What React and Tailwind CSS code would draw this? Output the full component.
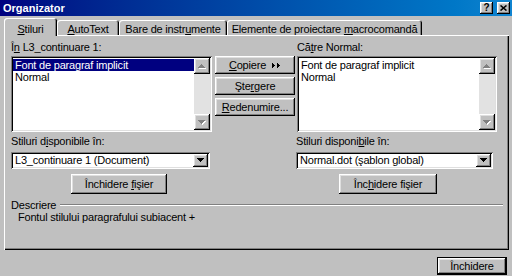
import React from 'react'

const raised =
  'shadow-[inset_-1px_-1px_#000,inset_1px_1px_#fff,inset_-2px_-2px_#808080,inset_2px_2px_#dfdfdf]'
const sunken =
  'shadow-[inset_1px_1px_#808080,inset_-1px_-1px_#fff,inset_2px_2px_#000,inset_-2px_-2px_#dfdfdf]'
const tabEdge = 'shadow-[inset_1px_1px_#fff,inset_-1px_0_#000,inset_-2px_0_#808080]'

// little pixel triangle, 7 wide 4 high
function Tri({ up, fill = '#000', shadow }) {
  const rows = up ? [3, 2, 1, 0] : [0, 1, 2, 3]
  const draw = (c, o) =>
    rows.map((r, i) => (
      <rect key={c + i} x={r + o} y={i + o} width={7 - r * 2} height={1} fill={c} />
    ))
  return (
    <svg width="8" height="5" viewBox="0 0 8 5" shapeRendering="crispEdges">
      {shadow && draw(shadow, 1)}
      {draw(fill, 0)}
    </svg>
  )
}

function Btn({ className = '', children }) {
  return (
    <div className={`flex items-center justify-center bg-[#c0c0c0] ${raised} ${className}`}>
      {children}
    </div>
  )
}

function ScrollBar() {
  return (
    <div className="flex w-[16px] flex-col">
      <Btn className="h-[16px]">
        <Tri up fill="#808080" shadow="#fff" />
      </Btn>
      <div className="flex-1 bg-[#e2e2e2]" />
      <Btn className="h-[16px]">
        <Tri fill="#808080" shadow="#fff" />
      </Btn>
    </div>
  )
}

function ListBox({ selected }) {
  const items = ['Font de paragraf implicit', 'Normal']
  return (
    <div className={`mt-[2px] flex h-[76px] bg-white p-[2px] ${sunken}`}>
      <div className="flex flex-1 flex-col pt-[1px]">
        {items.map((it, i) => (
          <div
            key={it}
            className={`h-[12px] pl-[2px] leading-[12px] ${
              i === selected ? 'bg-[#000080] text-white' : ''
            }`}
          >
            {it}
          </div>
        ))}
      </div>
      <ScrollBar />
    </div>
  )
}

function Combo({ text }) {
  return (
    <div className={`mt-[4px] flex h-[17px] bg-white p-[2px] ${sunken}`}>
      <div className="flex-1 pl-[2px] leading-[13px]">{text}</div>
      <Btn className="w-[15px]">
        <Tri />
      </Btn>
    </div>
  )
}

export default function App() {
  return (
    <div className="flex h-[276px] w-[512px] flex-col overflow-hidden bg-[#c0c0c0] font-['Liberation_Sans',Arial,sans-serif] text-[11px] tracking-[-0.2px] text-black">
      {/* title bar */}
      <div className="flex h-[16px] items-center justify-between bg-linear-to-r from-[#000080] to-[#1084d0] pl-[3px] pr-[2px]">
        <span className="font-bold tracking-normal text-white">Organizator</span>
        <div className="flex gap-[4px]">
          <Btn className="h-[12px] w-[13px] text-[10px] font-bold leading-none">?</Btn>
          <Btn className="h-[12px] w-[13px]">
            <svg width="7" height="6" viewBox="0 0 7 6">
              <path d="M0.5 0.5 L6.5 5.5 M6.5 0.5 L0.5 5.5" stroke="#000" strokeWidth="1.6" />
            </svg>
          </Btn>
        </div>
      </div>

      {/* tabs */}
      <div className="flex h-[19px] items-end pl-[4px]">
        <div className={`relative z-10 -mb-px flex h-[18px] w-[53px] justify-center rounded-t-[3px] bg-[#c0c0c0] pt-[3px] ${tabEdge}`}>
          <span>
            <u>S</u>tiluri
          </span>
        </div>
        <div className={`flex h-[15px] w-[62px] justify-center rounded-t-[3px] pt-[1px] ${tabEdge}`}>
          <span>
            <u>A</u>utoText
          </span>
        </div>
        <div className={`flex h-[15px] w-[108px] justify-center rounded-t-[3px] pt-[1px] ${tabEdge}`}>
          <span>
            Bare de instr<u>u</u>mente
          </span>
        </div>
        <div className={`flex h-[15px] w-[195px] justify-center rounded-t-[3px] pt-[1px] ${tabEdge}`}>
          <span>
            Elemente de proiectare <u>m</u>acrocomandă
          </span>
        </div>
      </div>

      {/* tab panel */}
      <div className="ml-[4px] flex h-[215px] w-[505px] flex-col pl-[7px] pt-[6px] shadow-[inset_1px_1px_#fff,inset_-1px_-1px_#000,inset_-2px_-2px_#808080]">
        <div className="flex">
          <div className="w-[201px]">
            <div className="h-[13px] leading-[13px]">
              Î<u>n</u> L3_continuare 1:
            </div>
            <ListBox selected={0} />
          </div>
          <div className="ml-[3px] flex w-[80px] flex-col gap-[3px] pt-[15px]">
            <Btn className="h-[18px] gap-[6px]">
              <span>
                <u>C</u>opiere
              </span>
              <svg width="9" height="5" viewBox="0 0 9 5" shapeRendering="crispEdges">
                <path d="M0 0 L3 2.5 L0 5 Z M5 0 L8 2.5 L5 5 Z" fill="#000" />
              </svg>
            </Btn>
            <Btn className="h-[18px]">
              <span>
                Şte<u>r</u>gere
              </span>
            </Btn>
            <Btn className="h-[18px]">
              <span>
                <u>R</u>edenumire...
              </span>
            </Btn>
          </div>
          <div className="ml-[2px] w-[200px]">
            <div className="h-[13px] leading-[13px]">
              Că<u>t</u>re Normal:
            </div>
            <ListBox selected={-1} />
          </div>
        </div>

        <div className="mt-[3px] flex">
          <div className="w-[199px]">
            <div className="h-[13px] leading-[13px]">
              Stiluri d<u>i</u>sponibile în:
            </div>
            <Combo text="L3_continuare 1 (Document)" />
            <Btn className="ml-[60px] mt-[5px] h-[20px] w-[96px]">
              <span>
                Închidere <u>f</u>işier
              </span>
            </Btn>
          </div>
          <div className="ml-[86px] w-[197px]">
            <div className="h-[13px] leading-[13px]">
              Stiluri disponi<u>b</u>ile în:
            </div>
            <Combo text="Normal.dot (şablon global)" />
            <Btn className="ml-[43px] mt-[5px] h-[20px] w-[98px]">
              <span>
                Înc<u>h</u>idere fişier
              </span>
            </Btn>
          </div>
        </div>

        <div className="mt-[5px] flex h-[12px] items-center">
          <span>Descriere</span>
          <div className="ml-[4px] mr-[6px] h-[2px] flex-1 border-t border-b border-t-[#808080] border-b-white" />
        </div>
        <div className="h-[13px] pl-[7px] leading-[13px]">Fontul stilului paragrafului subiacent +</div>
      </div>

      <Btn className="mr-[5px] mt-[7px] h-[18px] w-[70px] self-end border border-black">
        <span>Închidere</span>
      </Btn>
    </div>
  )
}
